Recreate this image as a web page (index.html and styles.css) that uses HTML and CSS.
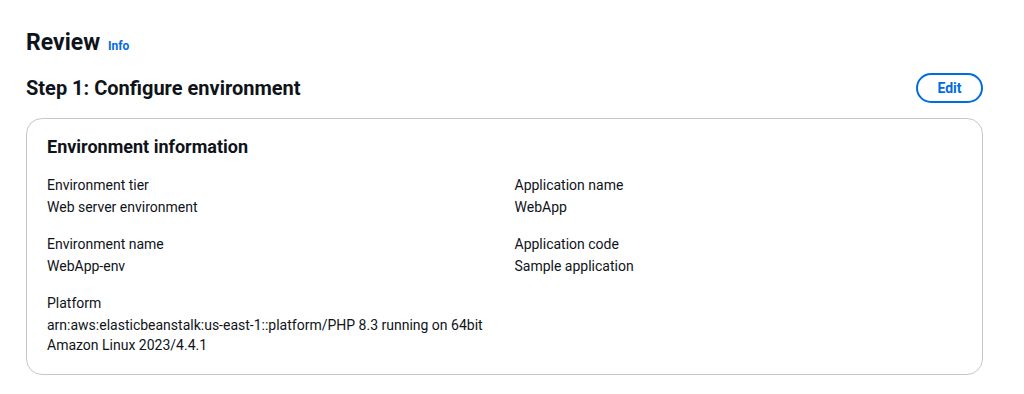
FILE: index.html
```html
<!DOCTYPE html>
<html lang="en">
<head>
  <meta charset="UTF-8" />
  <title>Review</title>
  <link rel="stylesheet" href="styles.css">
</head>
<body>

  <div class="page">
    <div class="page-header">
      <h1>Review</h1>
      <a class="info" href="#">Info</a>
    </div>

    <div class="step-header">
      <h2>Step 1: Configure environment</h2>
      <button class="edit">Edit</button>
    </div>

    <div class="card">
      <h3>Environment information</h3>
      <div class="fields">
        <div class="field">
          <div class="label">Environment tier</div>
          <div class="value">Web server environment</div>
        </div>
        <div class="field">
          <div class="label">Application name</div>
          <div class="value">WebApp</div>
        </div>
        <div class="field">
          <div class="label">Environment name</div>
          <div class="value">WebApp-env</div>
        </div>
        <div class="field">
          <div class="label">Application code</div>
          <div class="value">Sample application</div>
        </div>
        <div class="field">
          <div class="label">Platform</div>
          <div class="value">arn:aws:elasticbeanstalk:us-east-1::platform/PHP 8.3 running on 64bit Amazon Linux 2023/4.4.1</div>
        </div>
      </div>
    </div>
  </div>

</body>
</html>
```

FILE: styles.css
```css
body {
  margin: 0;
  background: #fff;
  color: #0f141a;
  font-family: Roboto, 'Liberation Sans', sans-serif;
  font-size: 14px;
  line-height: 20px;
}

.page {
  padding: 28px 41px 0 26px;
}

.page-header {
  display: flex;
  align-items: baseline;
  gap: 8px;
}

.page-header h1 {
  margin: 0;
  font-size: 23px;
  line-height: 30px;
  font-weight: 700;
}

.info {
  color: #006ce0;
  font-size: 12px;
  font-weight: 700;
  text-decoration: none;
}

.step-header {
  display: flex;
  justify-content: space-between;
  align-items: center;
  margin-top: 15px;
}

.step-header h2 {
  margin: 0;
  font-size: 20px;
  line-height: 24px;
  font-weight: 700;
}

.edit {
  height: 30px;
  width: 67px;
  border: 2px solid #006ce0;
  border-radius: 16px;
  background: #fff;
  color: #006ce0;
  font-family: inherit;
  font-size: 14px;
  font-weight: 700;
  cursor: pointer;
}

.card {
  margin-top: 15px;
  border: 1px solid #c6c6cd;
  border-radius: 16px;
  padding: 17px 20px 19px;
}

.card h3 {
  margin: 0;
  font-size: 18px;
  line-height: 22px;
  font-weight: 700;
}

.fields {
  display: grid;
  grid-template-columns: 1fr 1fr;
  column-gap: 20px;
  row-gap: 17px;
  margin-top: 17px;
}

.label {
  margin-bottom: 2px;
}
```
